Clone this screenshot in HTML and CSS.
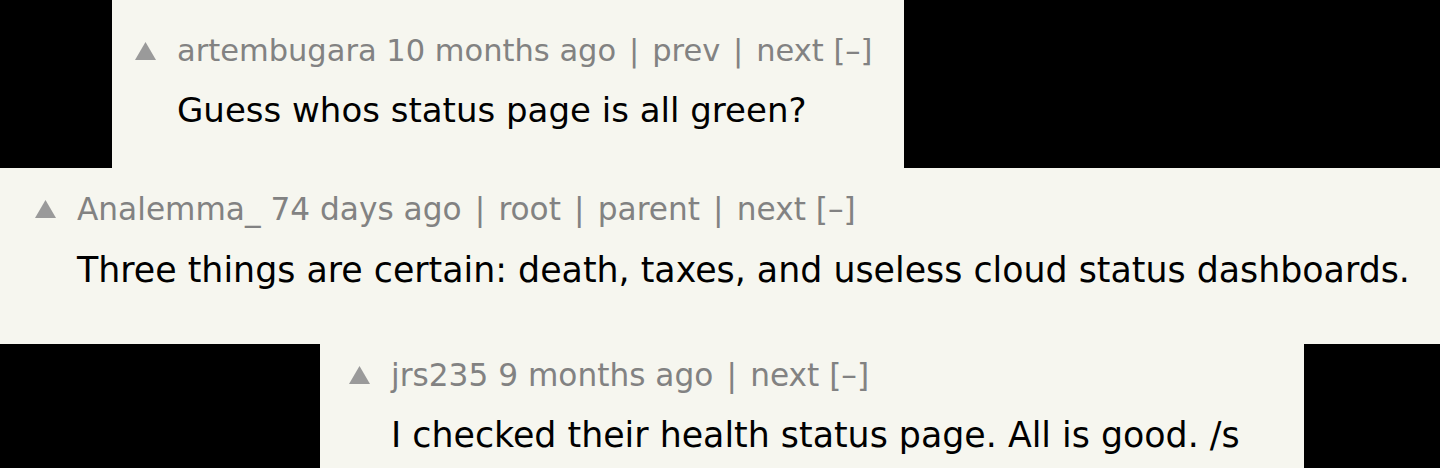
FILE: index.html
```html
<!DOCTYPE html>
<html lang="en">
<head>
<meta charset="utf-8">
<title>Comments</title>
<link rel="stylesheet" href="styles.css">
</head>
<body>
<main class="stack">
  <section class="card card-a">
    <div class="vote"><svg class="arrow" viewBox="0 0 21 18"><polygon points="10.5,0 21,18 0,18"/></svg></div>
    <div class="content">
      <div class="meta">artembugara 10 months ago <span class="sep">|</span> prev <span class="sep">|</span> next [–]</div>
      <p class="text">Guess whos status page is all green?</p>
    </div>
  </section>
  <section class="card card-b large">
    <div class="vote"><svg class="arrow" viewBox="0 0 21 18"><polygon points="10.5,0 21,18 0,18"/></svg></div>
    <div class="content">
      <div class="meta">Analemma_ 74 days ago <span class="sep">|</span> root <span class="sep">|</span> parent <span class="sep">|</span> next [–]</div>
      <p class="text">Three things are certain: death, taxes, and useless cloud status dashboards.</p>
    </div>
  </section>
  <section class="card card-c large">
    <div class="vote"><svg class="arrow" viewBox="0 0 21 18"><polygon points="10.5,0 21,18 0,18"/></svg></div>
    <div class="content">
      <div class="meta">jrs235 9 months ago <span class="sep">|</span> next [–]</div>
      <p class="text">I checked their health status page. All is good. /s</p>
    </div>
  </section>
</main>
</body>
</html>
```

FILE: styles.css
```css
html, body {
  margin: 0;
  padding: 0;
  background: #000;
}

body {
  width: 1440px;
  height: 468px;
  overflow: hidden;
  font-family: "DejaVu Sans", Verdana, sans-serif;
}

.stack {
  display: flex;
  flex-direction: column;
  align-items: flex-start;
}

.card {
  background: #f6f6ef;
  display: flex;
  align-items: flex-start;
  box-sizing: border-box;
}

.card-a {
  margin-left: 112px;
  width: 792px;
  height: 168px;
  padding: 33px 0 0 23px;
}

.card-b {
  margin-left: 0;
  width: 1440px;
  height: 176px;
  padding: 23px 0 0 35px;
}

.card-c {
  margin-left: 320px;
  width: 984px;
  height: 124px;
  padding: 13px 0 0 29px;
}

.vote {
  width: 42px;
  flex: none;
  height: 36px;
  display: flex;
  align-items: flex-end;
  padding-bottom: 9px;
  box-sizing: border-box;
}

.arrow {
  width: 21px;
  height: 18px;
  display: block;
  fill: #9a9a9a;
}

.content {
  display: flex;
  flex-direction: column;
  gap: 21px;
}

.meta {
  color: #828282;
  font-size: 30.5px;
  line-height: 36px;
  white-space: nowrap;
}

.sep {
  padding: 0 0.104em;
}

.text {
  margin: 0;
  color: #000;
  font-size: 34px;
  line-height: 40px;
  white-space: nowrap;
}

.large .meta {
  font-size: 31.2px;
}

.large .text {
  font-size: 34.8px;
}

.card-b .content {
  gap: 23px;
}

.card-c .content {
  gap: 22px;
}
```
